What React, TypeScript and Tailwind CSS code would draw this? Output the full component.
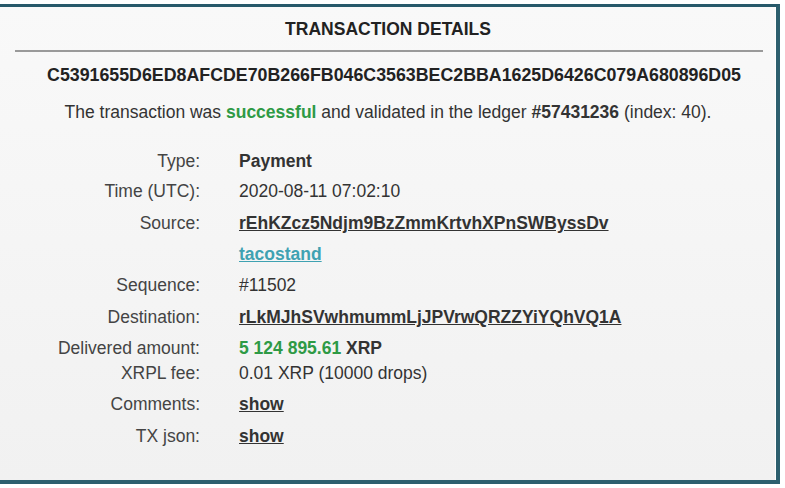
const rows: { label: string; value: React.ReactNode; gap: string }[] = [
  { label: "Type:", value: <span className="font-bold">Payment</span>, gap: "" },
  { label: "Time (UTC):", value: "2020-08-11 07:02:10", gap: "mt-[10px]" },
  {
    label: "Source:",
    value: <a className="font-bold underline">rEhKZcz5Ndjm9BzZmmKrtvhXPnSWByssDv</a>,
    gap: "mt-[12px]",
  },
  {
    label: "",
    value: <a className="font-bold text-[#3fa2b2] underline">tacostand</a>,
    gap: "mt-[11px]",
  },
  { label: "Sequence:", value: "#11502", gap: "mt-[11px]" },
  {
    label: "Destination:",
    value: <a className="font-bold underline">rLkMJhSVwhmummLjJPVrwQRZZYiYQhVQ1A</a>,
    gap: "mt-[12px]",
  },
  {
    label: "Delivered amount:",
    value: (
      <span className="font-bold">
        <span className="text-[#2e9a45]">5 124 895.61</span> XRP
      </span>
    ),
    gap: "mt-[11px]",
  },
  { label: "XRPL fee:", value: "0.01 XRP (10000 drops)", gap: "mt-[5px]" },
  { label: "Comments:", value: <a className="font-bold underline">show</a>, gap: "mt-[11px]" },
  { label: "TX json:", value: <a className="font-bold underline">show</a>, gap: "mt-[12px]" },
];

export default function App() {
  return (
    <div className="h-[488px] w-[785px] bg-white pt-[4px] font-['Liberation_Sans',Arial,sans-serif] text-[17.5px] text-[#333]">
      <div className="h-[480px] w-[780px] border-t-[3px] border-r-4 border-b-4 border-[#2d5f6e] border-t-[#27596a] bg-gradient-to-b from-[#f9f9f9] to-[#f1f1f1] shadow-[inset_-1px_0_0_#ffffff]">
        <div className="flex w-[776px] flex-col">
          <h2 className="mt-[12px] text-center text-[17.5px] leading-[20px] font-bold text-[#222]">
            TRANSACTION DETAILS
          </h2>
          <div className="mt-[11px] mr-[13px] ml-[15px] h-[2px] bg-[#9a9a9a]" />
          <div className="mt-[13px] pl-[12px] text-center text-[17.8px] leading-[20px] font-bold text-[#222]">
            C5391655D6ED8AFCDE70B266FB046C3563BEC2BBA1625D6426C079A680896D05
          </div>
          <p className="mt-[17px] text-center leading-[20px]">
            The transaction was <span className="font-bold text-[#2e9a45]">successful</span> and validated in
            the ledger <span className="font-bold">#57431236</span> (index: 40).
          </p>
          <div className="mt-[29px] flex flex-col">
            {rows.map((r, i) => (
              <div key={i} className={`flex leading-[20px] ${r.gap}`}>
                <div className="w-[200px] shrink-0 text-right text-[#444]">{r.label}</div>
                <div className="ml-[39px] whitespace-nowrap">{r.value}</div>
              </div>
            ))}
          </div>
        </div>
      </div>
    </div>
  );
}
